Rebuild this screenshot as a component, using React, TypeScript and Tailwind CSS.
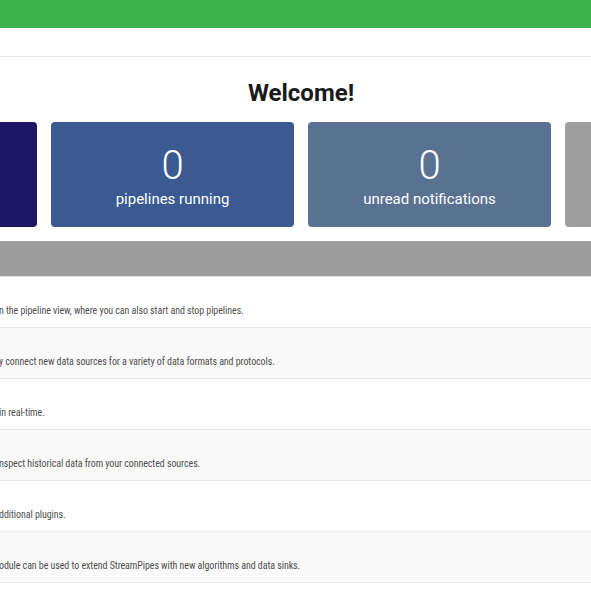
import React from "react";

const rows = [
  "n the pipeline view, where you can also start and stop pipelines.",
  "y connect new data sources for a variety of data formats and protocols.",
  "in real-time.",
  "nspect historical data from your connected sources.",
  "dditional plugins.",
  "odule can be used to extend StreamPipes with new algorithms and data sinks.",
];

function StatCard({ label, bg }: { label: string; bg: string }) {
  return (
    <div className={`w-[243px] h-[105px] shrink-0 rounded-[4px] ${bg} flex flex-col items-center pt-[24px] text-white`}>
      <div className="text-[40px] leading-[40px] font-light">0</div>
      <div className="text-[15px] leading-[20px] mt-[3px]">{label}</div>
    </div>
  );
}

export default function App() {
  return (
    <div className="w-[591px] h-[592px] overflow-hidden bg-white font-['Roboto',sans-serif]">
      <div className="h-[28px] bg-[#3bb34a]" />
      <div className="h-[29px] border-b border-[#e6e6e6]" />
      <div className="pt-[22px] pb-[15px] pl-[11px] flex justify-center">
        <h1 className="text-[24px] leading-[28px] font-bold text-[#1a1a1a]">Welcome!</h1>
      </div>
      <div className="flex gap-[14px] ml-[-206px]">
        <div className="w-[243px] h-[105px] shrink-0 rounded-[4px] bg-[#1d1565]" />
        <StatCard label="pipelines running" bg="bg-[#3b5a91]" />
        <StatCard label="unread notifications" bg="bg-[#5a7291]" />
        <div className="w-[243px] h-[105px] shrink-0 rounded-[4px] bg-[#9e9e9e]" />
      </div>
      <div className="mt-[14px] h-[36px] bg-[#9c9c9c] border-b border-[#dcdcdc]" />
      <div className="flex flex-col">
        {rows.map((t, i) => (
          <div
            key={i}
            className={`h-[51px] border-b border-[#e8e8e8] flex items-end pb-[9px] ${i % 2 === 0 ? "bg-white" : "bg-[#f9f9f9]"}`}
          >
            <span className="font-['Roboto_Condensed','Roboto',sans-serif] text-[10px] leading-[14px] tracking-[-0.08px] text-[#505050] whitespace-nowrap ml-[-1px]">
              {t}
            </span>
          </div>
        ))}
      </div>
    </div>
  );
}
